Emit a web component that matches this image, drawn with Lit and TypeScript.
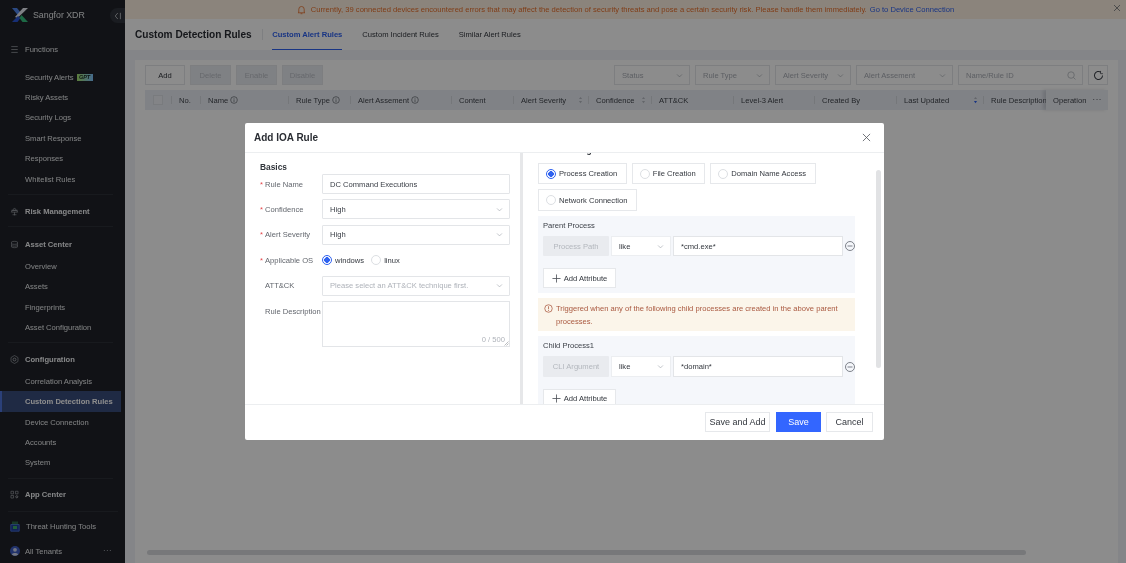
import { LitElement, css, html, svg } from 'lit';
import { customElement } from 'lit/decorators.js';

const chevron = html`<svg class="chev" viewBox="0 0 10 10"><path d="M1.5 3.5 5 7l3.5-3.5" fill="none" stroke="currentColor" stroke-width="1" /></svg>`;
const info = html`<svg class="info" viewBox="0 0 12 12"><circle cx="6" cy="6" r="5" fill="none" stroke="currentColor" stroke-width="1" /><path d="M6 5v4M6 3v1" stroke="currentColor" stroke-width="1" /></svg>`;
const sorter = (active = false) => html`<svg class="sorter" viewBox="0 0 8 12"><path d="M4 1 6.5 4.5h-5z" fill="#b6bac2" /><path d="M4 11 6.5 7.5h-5z" fill=${active ? '#2f62f0' : '#b6bac2'} /></svg>`;
const minus = html`<svg class="minus" viewBox="0 0 12 12"><circle cx="6" cy="6" r="5.4" fill="none" stroke="#666b73" stroke-width="1" /><path d="M3 6h6" stroke="#666b73" stroke-width="1" /></svg>`;
const plus = html`<svg class="plus" viewBox="0 0 10 10"><path d="M5 .5v9M.5 5h9" stroke="#4b4f57" stroke-width=".9" /></svg>`;

const icons: Record<string, unknown> = {
	menu: svg`<path d="M3 3.5h10M3 8h10M3 12.5h10" stroke="currentColor" stroke-width="1" fill="none" />`,
	risk: svg`<path d="M8 2.5 11 6H5zM4.5 6.5h7L13 9H3zM8 9v5M5 13h6M3 6l2 1M13 6l-2 1" stroke="currentColor" stroke-width=".9" fill="none" />`,
	asset: svg`<path d="M3.5 4c0-1.2 9-1.2 9 0v8c0 1.2-9 1.2-9 0zM3.5 6.8c0 1.2 9 1.2 9 0M3.5 9.6c0 1.2 9 1.2 9 0" stroke="currentColor" stroke-width=".9" fill="none" />`,
	config: svg`<path d="M8 1.8 13.4 5v6L8 14.2 2.6 11V5z" stroke="currentColor" stroke-width=".9" fill="none" /><circle cx="8" cy="8" r="2.2" stroke="currentColor" stroke-width="1.2" fill="none" />`,
	app: svg`<path d="M2.5 3h4v4h-4zM9.5 3h4v4h-4zM2.5 9.5h4v4h-4z" stroke="currentColor" stroke-width=".9" fill="none" /><circle cx="11.5" cy="11.5" r="1.6" stroke="currentColor" stroke-width="1.2" fill="none" />`,
};

type NavEntry =
	| { kind: 'title'; text: string; icon: string; gap: string }
	| { kind: 'item'; text: string; active?: boolean; badge?: boolean }
	| { kind: 'rule'; cls?: string };

const nav: NavEntry[] = [
	{ kind: 'title', text: 'Functions', icon: 'menu', gap: 'plain f' },
	{ kind: 'item', text: 'Security Alerts', badge: true },
	{ kind: 'item', text: 'Risky Assets' },
	{ kind: 'item', text: 'Security Logs' },
	{ kind: 'item', text: 'Smart Response' },
	{ kind: 'item', text: 'Responses' },
	{ kind: 'item', text: 'Whitelist Rules' },
	{ kind: 'rule' },
	{ kind: 'title', text: 'Risk Management', icon: 'risk', gap: '' },
	{ kind: 'rule' },
	{ kind: 'title', text: 'Asset Center', icon: 'asset', gap: 'list' },
	{ kind: 'item', text: 'Overview' },
	{ kind: 'item', text: 'Assets' },
	{ kind: 'item', text: 'Fingerprints' },
	{ kind: 'item', text: 'Asset Configuration' },
	{ kind: 'rule', cls: 'tight' },
	{ kind: 'title', text: 'Configuration', icon: 'config', gap: 'list' },
	{ kind: 'item', text: 'Correlation Analysis' },
	{ kind: 'item', text: 'Custom Detection Rules', active: true },
	{ kind: 'item', text: 'Device Connection' },
	{ kind: 'item', text: 'Accounts' },
	{ kind: 'item', text: 'System' },
	{ kind: 'rule', cls: 'tight' },
	{ kind: 'title', text: 'App Center', icon: 'app', gap: '' },
	{ kind: 'rule', cls: 'wide' },
];

const columns = [
	{ w: 29, t: 'No.' },
	{ w: 88, t: 'Name', info: true },
	{ w: 62, t: 'Rule Type', info: true },
	{ w: 101, t: 'Alert Assement', info: true },
	{ w: 62, t: 'Content' },
	{ w: 75, t: 'Alert Severity', sort: true },
	{ w: 63, t: 'Confidence', sort: true },
	{ w: 82, t: 'ATT&CK' },
	{ w: 81, t: 'Level-3 Alert' },
	{ w: 82, t: 'Created By' },
	{ w: 87, t: 'Last Updated', sort: true, active: true },
	{ w: 63, t: 'Rule Description' },
];

const filters = [
	{ t: 'Status', w: 76 },
	{ t: 'Rule Type', w: 75 },
	{ t: 'Alert Severity', w: 76 },
	{ t: 'Alert Assement', w: 97 },
];

@customElement('app-root')
export class AppRoot extends LitElement {
	static styles = css`
		:host {
			display: block;
			height: 100vh;
			font-family: 'Liberation Sans', Arial, sans-serif;
			font-size: 7.6px;
			color: #33373e;
		}
		* {
			box-sizing: border-box;
		}
		.page {
			position: relative;
			display: flex;
			height: 100%;
			overflow: hidden;
			filter: blur(0.3px);
		}

		/* sidebar */
		.side {
			width: 125px;
			flex: none;
			background: #1f2229;
			color: #e9eaec;
			display: flex;
			flex-direction: column;
			font-size: 7.6px;
		}
		.brand {
			height: 30px;
			flex: none;
			display: flex;
			align-items: center;
			padding-left: 12px;
			gap: 5px;
			font-size: 8.8px;
			position: relative;
		}
		.brand svg {
			width: 16px;
			height: 14px;
		}
		.collapse {
			position: absolute;
			right: 0;
			top: 8px;
			width: 15px;
			height: 15px;
			background: #30343c;
			border-radius: 7.5px 0 0 7.5px;
			display: flex;
			align-items: center;
			justify-content: center;
		}
		.collapse svg {
			width: 8px;
			height: 8px;
		}
		.title {
			height: 20px;
			flex: none;
			display: flex;
			align-items: center;
			padding-left: 10px;
			gap: 6px;
			font-weight: 700;
			color: #f2f3f5;
		}
		.title svg {
			width: 9px;
			height: 9px;
			color: #b4b7bd;
			flex: none;
			transform: scale(1.15);
		}
		.title.plain {
			font-weight: 400;
			color: #e9eaec;
		}
		.title.f {
			margin-top: 9px;
			margin-bottom: 8px;
		}
		.title.list {
			margin-bottom: 2px;
		}
		.item {
			height: 20.4px;
			flex: none;
			display: flex;
			align-items: center;
			padding-left: 25px;
			gap: 3px;
			margin-right: 4px;
		}
		.item.on {
			background: #3a4d7c;
			font-weight: 700;
			color: #fff;
			border-left: 2px solid #4f76dc;
			padding-left: 23px;
		}
		.badge {
			width: 16px;
			height: 7px;
			font-size: 5.5px;
			line-height: 7px;
			font-style: italic;
			font-weight: 700;
			text-align: center;
			color: #14241c;
			background: linear-gradient(90deg, #a7e36f, #7fc3ff);
		}
		.rule {
			height: 1px;
			flex: none;
			background: #2d3037;
			margin: 4.5px 12px 7px 8px;
		}
		.rule.tight {
			margin-bottom: 5.7px;
		}
		.rule.wide {
			margin: 7px 7px 4px 8px;
		}
		.tool {
			height: 20px;
			flex: none;
			display: flex;
			align-items: center;
			gap: 6px;
			padding-left: 10px;
		}
		.tool svg {
			width: 10px;
			height: 11px;
			flex: none;
		}
		.tenant {
			margin-top: 5px;
			height: 20px;
			flex: none;
			display: flex;
			align-items: center;
			gap: 5px;
			padding: 0 13px 0 10px;
		}
		.tenant svg {
			width: 10px;
			height: 10px;
			flex: none;
		}
		.tenant i {
			margin-left: auto;
			font-style: normal;
			letter-spacing: 0.5px;
			line-height: 1;
			color: #b9bcc2;
		}

		/* main page */
		.main {
			flex: 1;
			min-width: 0;
			display: flex;
			flex-direction: column;
			background: #f0f3f8;
		}
		.banner {
			height: 19px;
			flex: none;
			background: #fef1e2;
			display: flex;
			align-items: center;
			justify-content: center;
			gap: 3px;
			color: #e8702c;
			position: relative;
		}
		.banner a {
			color: #2f62f0;
		}
		.banner .bell {
			width: 9px;
			height: 10px;
			margin-right: 2px;
		}
		.banner .shut {
			position: absolute;
			right: 5px;
			top: 3.5px;
			width: 8px;
			height: 8px;
			color: #8b8b8b;
		}
		.head {
			height: 31px;
			flex: none;
			background: #fff;
			display: flex;
			align-items: center;
			padding-left: 10px;
		}
		.head h1 {
			margin: 0;
			font-size: 10.1px;
			color: #2a2d33;
			padding-right: 10px;
			border-right: 1px solid #e6e8eb;
			line-height: 11px;
		}
		.tabs {
			display: flex;
			gap: 20px;
			padding-left: 9.5px;
			height: 100%;
		}
		.tab {
			display: flex;
			align-items: center;
			border-bottom: 1px solid transparent;
			padding-top: 1px;
		}
		.tab.on {
			color: #2f62f0;
			font-weight: 700;
			border-bottom-color: #2f62f0;
		}
		.card {
			flex: 1;
			margin: 10px 8px 0 10px;
			background: #fff;
			padding: 5px 10px 0;
			display: flex;
			flex-direction: column;
			min-height: 0;
		}
		.bar {
			display: flex;
			height: 20px;
			flex: none;
			gap: 5px;
		}
		.btn {
			height: 20px;
			display: flex;
			align-items: center;
			justify-content: center;
			border: 1px solid #e3e5e9;
			background: #fff;
			color: #33373e;
		}
		.btn.off {
			background: #e8ebf0;
			color: #b9bdc5;
			width: 41px;
		}
		.filters {
			margin-left: auto;
			display: flex;
			gap: 5px;
		}
		.drop {
			height: 20px;
			border: 1px solid #e3e5e9;
			display: flex;
			align-items: center;
			justify-content: space-between;
			padding: 0 6px 0 7px;
			color: #a9adb5;
		}
		.chev {
			width: 7px;
			height: 7px;
			color: #a9adb5;
			flex: none;
		}
		.refresh {
			width: 20px;
			height: 20px;
			border: 1px solid #e3e5e9;
			display: flex;
			align-items: center;
			justify-content: center;
		}
		.refresh svg {
			width: 11px;
			height: 11px;
		}
		.thead {
			margin-top: 5px;
			height: 20px;
			flex: none;
			display: flex;
			align-items: center;
			background: #e9edf4;
			color: #41454c;
			white-space: nowrap;
			position: relative;
		}
		.tick {
			width: 26px;
			display: flex;
			justify-content: center;
			flex: none;
			height: 100%;
			align-items: center;
		}
		.tick span {
			width: 10px;
			height: 10px;
			background: #eef1f6;
			border: 1px solid #dde0e5;
		}
		.th {
			flex: none;
			display: flex;
			align-items: center;
			gap: 2px;
			padding-left: 8px;
			overflow: hidden;
			position: relative;
			height: 100%;
		}
		.th::before {
			content: '';
			position: absolute;
			left: 0;
			top: 6px;
			bottom: 6px;
			width: 1px;
			background: #d6d9df;
		}
		.th .sorter {
			margin-left: auto;
			margin-right: 5px;
		}
		.sorter {
			width: 5px;
			height: 8px;
			flex: none;
		}
		.info {
			width: 8px;
			height: 8px;
			flex: none;
			color: #595d65;
		}
		.fixed {
			flex: 1;
			height: 100%;
			display: flex;
			align-items: center;
			padding-left: 7px;
			background: #eceff5;
			box-shadow: -3px 0 3px rgba(120, 125, 135, 0.25);
			position: relative;
		}
		.fixed em {
			font-style: normal;
			margin-left: auto;
			margin-right: 6px;
			letter-spacing: 0.6px;
			line-height: 1;
		}
		.fill {
			flex: 1;
		}
		.scroll {
			height: 5px;
			flex: none;
			margin: 0 82px 8px 2px;
			border-radius: 3px;
			background: #d9dade;
		}

		/* dialog */
		.mask {
			position: absolute;
			inset: 0;
			background: rgba(0, 0, 0, 0.45);
			display: flex;
			align-items: center;
			justify-content: center;
			padding-left: 3px;
		}
		.dialog {
			width: 639px;
			height: 317px;
			background: #fff;
			border-radius: 2px;
			display: flex;
			flex-direction: column;
			overflow: hidden;
		}
		.dlg-head {
			height: 30px;
			flex: none;
			border-bottom: 1px solid #eceef0;
			display: flex;
			align-items: center;
			justify-content: space-between;
			padding: 0 13px 0 9px;
		}
		.dlg-head b {
			font-size: 10px;
			color: #2a2d33;
		}
		.dlg-head svg {
			width: 9px;
			height: 9px;
			color: #53575e;
		}
		.dlg-body {
			flex: 1;
			min-height: 0;
			display: flex;
		}
		.left {
			width: 278px;
			flex: none;
			border-right: 3px solid #e6e7e9;
			padding: 8px 10px 0 15px;
			display: flex;
			flex-direction: column;
			gap: 5.4px;
		}
		.left h3 {
			margin: 0 0 -5.4px;
			height: 13px;
			line-height: 13px;
			font-size: 8.4px;
			color: #30343a;
		}
		.row {
			display: flex;
			align-items: center;
			min-height: 20px;
		}
		.row.top {
			align-items: flex-start;
		}
		.row label {
			width: 62px;
			flex: none;
			padding-left: 5px;
			color: #62666d;
			position: relative;
			white-space: nowrap;
		}
		.row.top label {
			padding-top: 6px;
		}
		.row label.req::before {
			content: '*';
			position: absolute;
			left: 0;
			top: 0;
			color: #e5484d;
		}
		.field {
			flex: 1;
			height: 20px;
			border: 1px solid #e3e5e8;
			border-radius: 1px;
			display: flex;
			align-items: center;
			justify-content: space-between;
			padding: 0 6px 0 7px;
			color: #3c4048;
			background: #fff;
		}
		.field.ph {
			color: #aeb2b9;
		}
		.area {
			flex: 1;
			height: 46px;
			border: 1px solid #e3e5e8;
			position: relative;
		}
		.count {
			position: absolute;
			right: 4px;
			bottom: 2px;
			color: #aeb2b9;
		}
		.grip {
			position: absolute;
			right: 0;
			bottom: 0;
			width: 5px;
			height: 5px;
		}
		.oses {
			display: flex;
			align-items: center;
			gap: 7px;
		}
		.radio {
			display: inline-flex;
			align-items: center;
			gap: 3px;
		}
		.dot {
			width: 10px;
			height: 10px;
			flex: none;
			border-radius: 50%;
			border: 1px solid #dcdfe3;
			background: #fff;
		}
		.dot.on {
			border-color: #2f62f0;
			background: radial-gradient(circle, #2f62f0 0 2.6px, #fff 3px);
		}
		.right {
			flex: 1;
			min-width: 0;
			overflow: hidden;
			position: relative;
			padding: 0 29px 0 15px;
		}
		.clip {
			margin: -8.5px 0 7.5px;
			height: 11px;
			line-height: 11px;
			font-size: 8.4px;
			font-weight: 700;
			color: #30343a;
		}
		.kinds {
			display: flex;
			flex-wrap: wrap;
			gap: 5px;
		}
		.kind {
			height: 21.4px;
			border: 1px solid #e6e8eb;
			display: flex;
			align-items: center;
			gap: 3px;
			padding: 0 8.5px 0 7px;
		}
		.sec {
			margin-top: 5px;
			background: #f5f7fb;
			padding: 4px 0 5px 5px;
		}
		.sec h4 {
			margin: 0;
			font-weight: 400;
			height: 12px;
			line-height: 12px;
			font-size: 7.6px;
			color: #3c4048;
		}
		.cond {
			margin-top: 4px;
			display: flex;
			align-items: center;
			gap: 2px;
		}
		.locked {
			width: 66px;
			height: 20.5px;
			flex: none;
			background: #e9ebef;
			border-radius: 1px;
			color: #b3b7bd;
			display: flex;
			align-items: center;
			justify-content: center;
		}
		.op {
			width: 60px;
			height: 20.5px;
			flex: none;
			background: #fff;
			border: 1px solid #eceef1;
			display: flex;
			align-items: center;
			justify-content: space-between;
			padding: 0 6px 0 7px;
		}
		.val {
			width: 170px;
			height: 20.5px;
			flex: none;
			background: #fff;
			border: 1px solid #e3e5e8;
			display: flex;
			align-items: center;
			padding-left: 7px;
		}
		.minus {
			width: 10px;
			height: 10px;
			flex: none;
		}
		.add {
			margin-top: 12px;
			width: 73px;
			height: 20px;
			background: #fff;
			border: 1px solid #e6e8eb;
			display: flex;
			align-items: center;
			justify-content: center;
			gap: 3px;
		}
		.plus {
			width: 9px;
			height: 9px;
		}
		.warn {
			margin-top: 5px;
			background: #fbf5ea;
			color: #a9583f;
			padding: 3.5px 8px 3.5px 18px;
			line-height: 13px;
			position: relative;
		}
		.warn svg {
			position: absolute;
			left: 6px;
			top: 5.5px;
			width: 9px;
			height: 9px;
		}
		.thumb {
			position: absolute;
			right: 3px;
			top: 17px;
			width: 5px;
			height: 198px;
			background: #e1e2e4;
			border-radius: 3px;
		}
		.dlg-foot {
			height: 36px;
			flex: none;
			border-top: 1px solid #eceef0;
			display: flex;
			align-items: center;
			justify-content: flex-end;
			gap: 5px;
			padding: 0 11px 2px 0;
		}
		.dlg-foot button {
			font: inherit;
			font-size: 9px;
			height: 20px;
			border: 1px solid #e6e8eb;
			background: #fff;
			color: #33373e;
			padding: 0;
		}
		.dlg-foot button.primary {
			background: #3366ff;
			border-color: #3366ff;
			color: #fff;
			margin-left: 1px;
		}
	`;

	renderNav() {
		return nav.map((n) => {
			if (n.kind === 'rule') return html`<div class="rule ${n.cls ?? ''}"></div>`;
			if (n.kind === 'title')
				return html`<div class="title ${n.gap}"><svg viewBox="0 0 16 16">${icons[n.icon]}</svg>${n.text}</div>`;
			return html`<div class="item ${n.active ? 'on' : ''}">
				${n.text}${n.badge ? html`<span class="badge">GPT</span>` : ''}
			</div>`;
		});
	}

	renderCond(name: string, value: string) {
		return html`<div class="cond">
				<div class="locked">${name}</div>
				<div class="op">like ${chevron}</div>
				<div class="val">${value}</div>
				${minus}
			</div>
			<div class="add">${plus} Add Attribute</div>`;
	}

	render() {
		return html`<div class="page">
			<aside class="side">
				<div class="brand">
					<svg viewBox="0 0 16 14">
						<path d="M0 0h5l4 5-2.5 3z" fill="#4f86ef" />
						<path d="M16 0h-5L3 9l2.5 1z" fill="#e7eaf2" />
						<path d="M0 14h5.5l3-4-2.5-2z" fill="#2a56d8" />
						<path d="M16 14h-5.5L7.5 10l2-3z" fill="#35c07e" />
					</svg>
					Sangfor XDR
					<div class="collapse">
						<svg viewBox="0 0 8 8"><path d="M3.8 1 1.2 4l2.6 3M6.4.8v6.4" fill="none" stroke="#b5b8be" stroke-width=".9" /></svg>
					</div>
				</div>
				${this.renderNav()}
				<div class="tool">
					<svg viewBox="0 0 10 11">
						<path d="M.8 3.5h8.4v6.7H.8z" fill="#1f3f9a" stroke="#4f79e8" stroke-width=".8" />
						<path d="M3 .5v3M5 .5v3M7 .5v3" stroke="#3fae6b" stroke-width="1" />
						<path d="M3 5h4v3H3z" fill="#3fae6b" />
					</svg>
					Threat Hunting Tools
				</div>
				<div class="tenant">
					<svg viewBox="0 0 10 10">
						<circle cx="5" cy="5" r="5" fill="#3d5cc4" />
						<circle cx="5" cy="3.8" r="1.9" fill="#cfd7ef" />
						<path d="M1.8 8.6C2.4 6.6 7.6 6.6 8.2 8.6 6.5 10.2 3.5 10.2 1.8 8.6z" fill="#cfd7ef" />
					</svg>
					All Tenants
					<i>···</i>
				</div>
			</aside>

			<main class="main">
				<div class="banner">
					<svg class="bell" viewBox="0 0 10 11">
						<path d="M2 7.8V4.6a3 3 0 0 1 6 0v3.2l.9.8H1.1zM4 9.6h2" fill="none" stroke="currentColor" stroke-width=".9" />
					</svg>
					<span>Currently, 39 connected devices encountered errors that may affect the detection of security threats and pose a certain security risk. Please handle them immediately.</span>
					<a>Go to Device Connection</a>
					<svg class="shut" viewBox="0 0 8 8"><path d="M1 1l6 6M7 1 1 7" stroke="currentColor" stroke-width="1" /></svg>
				</div>
				<div class="head">
					<h1>Custom Detection Rules</h1>
					<div class="tabs">
						<div class="tab on">Custom Alert Rules</div>
						<div class="tab">Custom Incident Rules</div>
						<div class="tab">Similar Alert Rules</div>
					</div>
				</div>
				<div class="card">
					<div class="bar">
						<div class="btn" style="width:40px">Add</div>
						<div class="btn off">Delete</div>
						<div class="btn off">Enable</div>
						<div class="btn off">Disable</div>
						<div class="filters">
							${filters.map((f) => html`<div class="drop" style="width:${f.w}px">${f.t} ${chevron}</div>`)}
							<div class="drop" style="width:125px">
								Name/Rule ID
								<svg style="width:9px;height:9px" viewBox="0 0 10 10"><circle cx="4.5" cy="4.5" r="3.6" fill="none" stroke="#b4b8bf" stroke-width=".9" /><path d="M7.2 7.2 9.4 9.4" stroke="#b4b8bf" stroke-width=".9" /></svg>
							</div>
							<div class="refresh">
								<svg viewBox="0 0 12 12"><path d="M10.4 6A4.4 4.4 0 1 1 8.6 2.4" fill="none" stroke="#3c4048" stroke-width="1.1" /><path d="M8.2 1v3h2.6" fill="none" stroke="#3c4048" stroke-width=".8" /></svg>
							</div>
						</div>
					</div>
					<div class="thead">
						<div class="tick"><span></span></div>
						${columns.map(
							(c) => html`<div class="th" style="width:${c.w}px">
								${c.t}${c.info ? info : ''}${c.sort ? sorter(c.active) : ''}
							</div>`,
						)}
						<div class="fixed">Operation<em>···</em></div>
					</div>
					<div class="fill"></div>
					<div class="scroll"></div>
				</div>
			</main>

			<div class="mask">
				<div class="dialog">
					<div class="dlg-head">
						<b>Add IOA Rule</b>
						<svg viewBox="0 0 10 10"><path d="M1 1l8 8M9 1 1 9" stroke="currentColor" stroke-width=".9" /></svg>
					</div>
					<div class="dlg-body">
						<div class="left">
							<h3>Basics</h3>
							<div class="row"><label class="req">Rule Name</label><div class="field">DC Command Executions</div></div>
							<div class="row"><label class="req">Confidence</label><div class="field">High ${chevron}</div></div>
							<div class="row"><label class="req">Alert Severity</label><div class="field">High ${chevron}</div></div>
							<div class="row">
								<label class="req">Applicable OS</label>
								<div class="oses">
									<span class="radio"><span class="dot on"></span>windows</span>
									<span class="radio"><span class="dot"></span>linux</span>
								</div>
							</div>
							<div class="row"><label>ATT&amp;CK</label><div class="field ph">Please select an ATT&amp;CK technique first. ${chevron}</div></div>
							<div class="row top">
								<label>Rule Description</label>
								<div class="area">
									<span class="count">0 / 500</span>
									<svg class="grip" viewBox="0 0 5 5"><path d="M.5 4.5l4-4M2.5 4.5l2-2" stroke="#8d9096" stroke-width=".6" /></svg>
								</div>
							</div>
						</div>
						<div class="right">
							<div class="clip">Behavior Logic</div>
							<div class="kinds">
								<div class="kind"><span class="dot on"></span>Process Creation</div>
								<div class="kind"><span class="dot"></span>File Creation</div>
								<div class="kind"><span class="dot"></span>Domain Name Access</div>
								<div class="kind"><span class="dot"></span>Network Connection</div>
							</div>
							<div class="sec">
								<h4>Parent Process</h4>
								${this.renderCond('Process Path', '*cmd.exe*')}
							</div>
							<div class="warn">
								<svg viewBox="0 0 12 12"><circle cx="6" cy="6" r="5" fill="none" stroke="currentColor" stroke-width="1" /><path d="M6 3v4M6 8v1.2" stroke="currentColor" stroke-width="1" /></svg>
								Triggered when any of the following child processes are created in the above parent processes.
							</div>
							<div class="sec">
								<h4>Child Process1</h4>
								${this.renderCond('CLI Argument', '*domain*')}
							</div>
							<div class="thumb"></div>
						</div>
					</div>
					<div class="dlg-foot">
						<button style="width:65px">Save and Add</button>
						<button class="primary" style="width:45px">Save</button>
						<button style="width:47px">Cancel</button>
					</div>
				</div>
			</div>
		</div>`;
	}
}
